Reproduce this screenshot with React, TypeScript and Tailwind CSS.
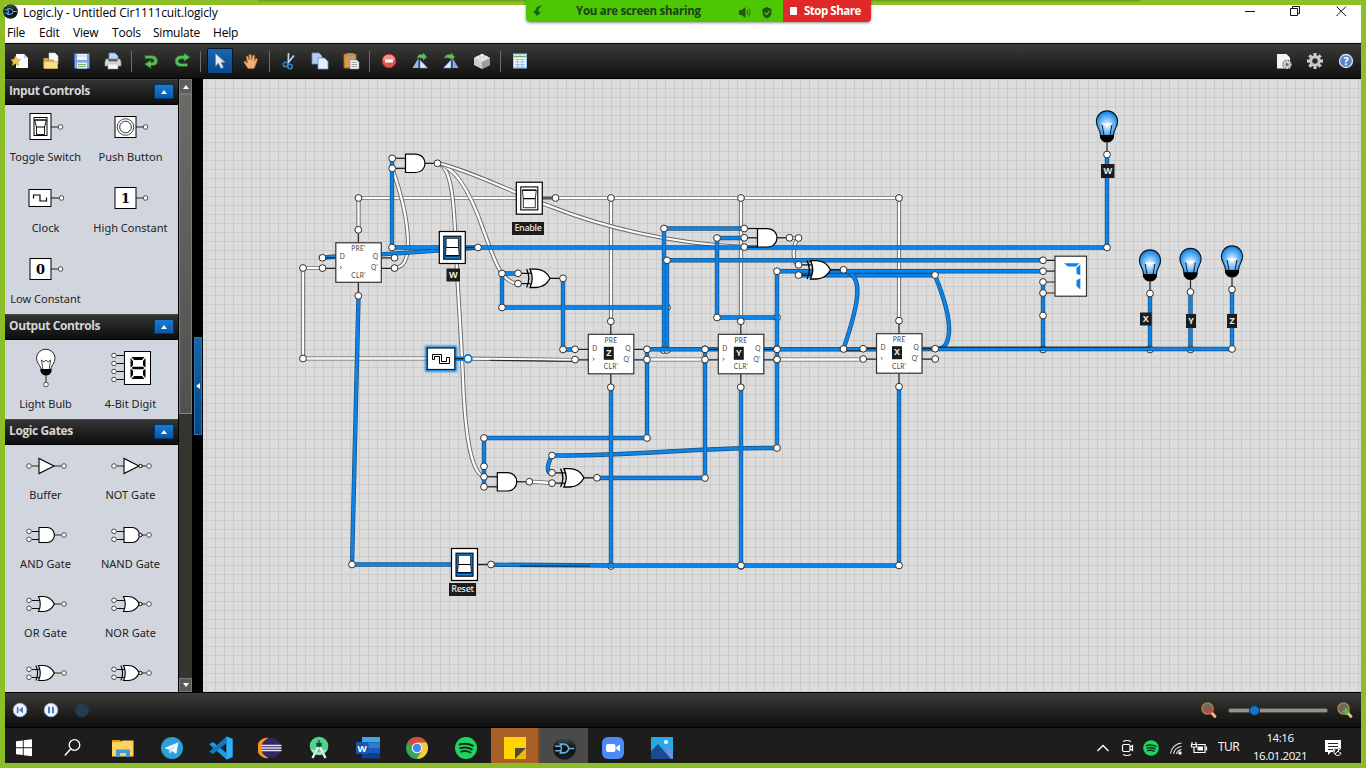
import React from "react";

type Kids = { children?: React.ReactNode };

/* ---------- shared schematic shapes ---------- */

const AND = "M0,-9.2 H10.3 A9.2,9.2 0 0 1 10.3,9.2 H0 Z";
const OR = "M0,-9.2 H6 C13,-9 17.5,-5 20,0 C17.5,5 13,9 6,9.2 H0 Q4.5,0 0,-9.2 Z";
const XOR_BACK = "M-3.4,-9.2 Q1.1,0 -3.4,9.2";

function Dot({ x, y, r = 3.4 }: { x: number; y: number; r?: number }) {
  return <circle cx={x} cy={y} r={r} fill="#fff" stroke={r > 3 ? "#2e2e2e" : "#4a4a4a"} strokeWidth={1} />;
}

function Tool({ children, active = false }: Kids & { active?: boolean }) {
  return (
    <div className="flex h-full w-[31px] items-center justify-center">
      <div
        className={
          active
            ? "flex h-[26px] w-[26px] items-center justify-center rounded-[2px] border border-[#02172f] bg-linear-to-b from-[#1a65ad] to-[#064a8b]"
            : "flex h-[26px] w-[26px] items-center justify-center"
        }
      >
        <svg width="18" height="18" viewBox="0 0 18 18">
          {children}
        </svg>
      </div>
    </div>
  );
}

function Sep() {
  return (
    <div className="flex h-full w-[7px] items-center justify-center">
      <div className="h-[21px] w-px bg-[#6c6c6c]" />
    </div>
  );
}

function Gear({ x, y, r, fill, hole }: { x: number; y: number; r: number; fill: string; hole: string }) {
  return (
    <g transform={`translate(${x} ${y})`}>
      {[0, 45, 90, 135].map((a) => (
        <rect key={a} x={-r * 0.2} y={-r} width={r * 0.4} height={r * 2} fill={fill} transform={`rotate(${a})`} />
      ))}
      <circle r={r * 0.72} fill={fill} />
      <circle r={r * 0.34} fill={hole} />
    </g>
  );
}

function LogiclyLogo({ size }: { size: number }) {
  return (
    <svg width={size} height={size} viewBox="0 0 22 22" className="shrink-0">
      <defs>
        <linearGradient id="lgo" x1="0" y1="0" x2="0" y2="1">
          <stop offset="0" stopColor="#4b5054" />
          <stop offset="0.5" stopColor="#0b0d0f" />
          <stop offset="1" stopColor="#1d2124" />
        </linearGradient>
      </defs>
      <circle cx="11" cy="11" r="10.8" fill="url(#lgo)" />
      <path
        d="M7,6.8 H10.5 C13,7 14.6,9 15.2,11 C14.6,13 13,15 10.5,15.2 H7 Q9,11 7,6.8 Z M2,8.9 H8 M2,13.1 H8 M15.2,11 H20.5"
        fill="none"
        stroke="#63aee6"
        strokeWidth="1.5"
      />
    </svg>
  );
}

/* ---------- title, menu, toolbar ---------- */

function ShareBar() {
  return (
    <div className="absolute left-[526px] top-0 z-20 flex h-[22px] w-[345px] overflow-hidden rounded-b-[4px] font-['Open_Sans',sans-serif] text-[11.5px] font-bold shadow-[0_1px_3px_rgba(0,0,0,0.45)]">
      <div className="flex w-[257px] items-center bg-[#4dc701] text-[#20401a]">
        <svg width="16" height="16" viewBox="0 0 16 16" className="ml-[4px]">
          <path d="M12.5 2.8 C9 2.2 5.5 4 5.5 8 H3 L6.8 13 L11 9.5 L8.5 8.7 C8.2 6 9.5 4 12.5 2.8Z" fill="#12661a" />
        </svg>
        <span className="ml-[30px] w-[130px] whitespace-nowrap tracking-[-0.28px]">You are screen sharing</span>
        <svg width="40" height="16" viewBox="0 0 40 16" className="ml-[31px] mt-[2px]">
          <path d="M2 6 H4.500 L8.500 3 V14 L4.500 11 H2Z" fill="#285719" />
          <path d="M10 6 Q11.500 8.500 10 11 M12 4.500 Q14 8.500 12 12.500" fill="none" stroke="#2c7a16" strokeWidth="1.1" />
          <path d="M30 3 L34.500 5 V9 Q34 13 30 14.500 Q26 13 25.500 9 V5Z" fill="#24531a" />
          <path d="M27.500 8.500 L29.500 10.500 L33 7" fill="none" stroke="#50bd17" strokeWidth="1.3" />
        </svg>
      </div>
      <div className="flex flex-1 items-center bg-[#e12828] pb-[1px] text-white">
        <div className="ml-[7px] h-[8px] w-[7px] rounded-[1px] bg-white" />
        <span className="ml-[7px] whitespace-nowrap tracking-[-0.48px]">Stop Share</span>
      </div>
    </div>
  );
}

function TitleBar() {
  return (
    <div className="relative flex h-[17px] shrink-0 items-center bg-white font-['Open_Sans',sans-serif] text-[12px] text-black">
      <div className="-ml-[2px] -mt-[4px] flex">
        <LogiclyLogo size={15} />
      </div>
      <span className="-mt-[2px] ml-[5px] whitespace-nowrap tracking-[-0.14px]">Logic.ly - Untitled Cir1111cuit.logicly</span>
      <svg width="110" height="14" viewBox="1242 4 110 14" className="-mt-[4px] ml-auto mr-[9px]" fill="none" stroke="#111" strokeWidth="1">
        <path d="M1245 10.500 H1255" />
        <path d="M1290.500 7.500 H1297.500 V14.500 H1290.500Z M1292.500 7 V5.500 H1299.500 V12.500 H1298" />
        <path d="M1336.500 5.500 L1346 15 M1346 5.500 L1336.500 15" />
      </svg>
    </div>
  );
}

const MENUS: [string, string][] = [
  ["File", "w-[32px]"],
  ["Edit", "w-[34px]"],
  ["View", "w-[39px]"],
  ["Tools", "w-[41px]"],
  ["Simulate", "w-[60px]"],
  ["Help", "w-[30px]"],
];

function MenuBar() {
  return (
    <div className="flex h-[21px] shrink-0 items-center border-b-2 border-[#eef2f1] bg-white pl-[2px] pt-[2px] font-['Open_Sans',sans-serif] text-[12px] tracking-[-0.22px] text-black">
      {MENUS.map(([m, w]) => (
        <span key={m} className={w}>
          {m}
        </span>
      ))}
    </div>
  );
}

function Toolbar() {
  return (
    <div className="flex h-[36px] shrink-0 items-center border-b border-t border-black bg-linear-to-b from-[#3b3b3a] to-[#11110f]">
      <div className="-ml-px flex h-full">
        <Tool>
          <path d="M5 2 H13 L17 6 V16 H5Z" fill="#fafafa" />
          <path d="M13 2 V6 H17Z" fill="#c9ccd0" />
          <path d="M4.500 4 L6 7.200 L9.500 7.600 L7 10 L7.600 13.500 L4.500 11.700 L1.300 13.500 L2 10 L-0.500 7.600 L3 7.200Z" fill="#f3c540" stroke="#c08b20" strokeWidth=".5" />
        </Tool>
        <Tool>
          <path d="M7 1 H13 L16 4 V12 H7Z" fill="#f8fafc" stroke="#c9cdd2" strokeWidth=".6" />
          <path d="M1.500 6 H6 L7 7.500 H12 V16 H1.500Z" fill="#d9a13c" />
          <path d="M2 9.500 H15.500 V16.500 H2Z" fill="#fadf8e" stroke="#e2b04b" strokeWidth=".8" />
        </Tool>
        <Tool>
          <rect x="1.500" y="1.500" width="15" height="15" rx="1" fill="#7fa6e2" stroke="#3a67b4" />
          <rect x="4" y="2" width="10" height="6" fill="#eef4fd" />
          <path d="M4 4 H14" stroke="#b5cdf1" />
          <rect x="4" y="10.500" width="10" height="6" fill="#e6f0e2" />
          <path d="M5 12.500 H13 M5 14.500 H13" stroke="#80b565" />
        </Tool>
        <Tool>
          <path d="M5 1 H11 L14 4 V9 H5Z" fill="#b9d8f5" stroke="#5d91c9" strokeWidth=".7" />
          <path d="M2 7 H16 L17 10 V14 H1 V10Z" fill="#d8dade" stroke="#85898f" strokeWidth=".7" />
          <rect x="4.500" y="7" width="9" height="2.500" fill="#5b6168" />
          <rect x="4" y="12" width="10" height="5" fill="#f6f7f8" stroke="#999" strokeWidth=".5" />
        </Tool>
        <Sep />
        <Tool>
          <path d="M3 3.500 H10 Q15.500 4 15.500 9 Q15.500 13.500 10.500 13.500 H9 V16.500 L2.500 12 L9 8 V10.500 H10 Q12 10.500 12 8.600 Q12 6.700 9.500 6.700 H3Z" fill="#5dbb5b" stroke="#216a2a" strokeWidth=".8" />
        </Tool>
        <Tool>
          <path d="M11 1 V3.500 H8 Q2 4 2 9 Q2 14.500 8 14.500 H14.500 V11.500 H8 Q5.500 11.500 5.500 9 Q5.500 7 8 7 H11 V9.500 L17 5Z" fill="#5dbb5b" stroke="#216a2a" strokeWidth=".8" />
        </Tool>
        <Sep />
        <Tool active>
          <path d="M4.500 1.500 V14 L7.500 11.200 L10 16.500 L12.500 15.300 L10 10.300 H14Z" fill="#e9e9ed" stroke="#7c8794" strokeWidth=".7" />
        </Tool>
        <Tool>
          <path d="M6 16.500 L1.800 10 Q2 8.500 3.500 9.500 L5.500 11 L4.300 5 Q4.500 3.500 6 4.500 L7.200 8 L7 3 Q8 1.500 9.200 3 L9.600 8 L10.800 3.500 Q12 2.500 12.800 4 L12.300 9 L13.800 6.500 Q15 6 15.500 7.500 L13.500 13 L12 16.500Z" fill="#edb27c" stroke="#ad6b35" strokeWidth=".8" />
        </Tool>
        <Sep />
        <Tool>
          <path d="M8.500 1 L8.300 11 M14 3.500 L7.500 11.500" stroke="#bed6ef" strokeWidth="1.700" />
          <circle cx="5.500" cy="12.500" r="2.200" fill="none" stroke="#3d82c5" strokeWidth="1.500" />
          <circle cx="10" cy="14.500" r="2.200" fill="none" stroke="#3d82c5" strokeWidth="1.500" />
        </Tool>
        <Tool>
          <path d="M1 1 H8 L11 4 V12 H1Z" fill="#b7cbef" stroke="#6b8fd2" strokeWidth=".8" />
          <path d="M7 6 H13.500 L17 9.500 V17 H7Z" fill="#e6eefc" stroke="#6b8fd2" strokeWidth=".8" />
        </Tool>
        <Tool>
          <rect x="2" y="2" width="12" height="14" rx="1" fill="#d89a48" stroke="#a4692c" />
          <rect x="5" y="1" width="6" height="3.500" fill="#9c958a" />
          <path d="M8 8 H15 L17 10 V17 H8Z" fill="#f2f2f4" stroke="#888" strokeWidth=".6" />
          <path d="M9.500 10.500 H15 M9.500 12.500 H15 M9.500 14.500 H15" stroke="#858b95" strokeWidth=".8" />
        </Tool>
        <Sep />
        <Tool>
          <circle cx="9" cy="9" r="6.800" fill="#e2574c" stroke="#b8322d" />
          <path d="M2.800 8 A6.300 6.300 0 0 1 15.200 8Z" fill="#f19188" />
          <rect x="5" y="7.500" width="8" height="3" rx=".5" fill="#fff" />
        </Tool>
        <Tool>
          <path d="M7.500 6 V16 H1.500Z" fill="#9abcf0" />
          <path d="M9 8 L16.500 16 H9Z" fill="#e0ebfc" stroke="#6693dc" strokeWidth=".7" />
          <path d="M6 6 Q7 1.500 12 2.500 V.5 L16 5 L12 8.500 V6.500 Q8 5.500 6 6Z" fill="#65b95d" stroke="#2a7130" strokeWidth=".6" />
        </Tool>
        <Tool>
          <path d="M10.500 6 V16 H16.500Z" fill="#84aaf0" />
          <path d="M9 8 L1.500 16 H9Z" fill="#e0ebfc" stroke="#6693dc" strokeWidth=".7" />
          <path d="M2 6 Q4 1.500 9 2.500 V.5 L13 5 L9 8.500 V6.500 Q5 5.500 2 6Z" fill="#65b95d" stroke="#2a7130" strokeWidth=".6" />
        </Tool>
        <Tool>
          <path d="M1 6 L9 2 L17 6 V13 L9 17 L1 13Z" fill="#cdcdcd" />
          <path d="M1 6 L9 10 L17 6 L9 2Z" fill="#eee" />
          <path d="M9 10 V17 L17 13 V6Z" fill="#9d9d9d" />
          <g fill="#f7f7f7" stroke="#aaa" strokeWidth=".5">
            <ellipse cx="9" cy="3.500" rx="2" ry="1.500" />
            <ellipse cx="5" cy="5.500" rx="2" ry="1.500" />
            <ellipse cx="13" cy="5.500" rx="2" ry="1.500" />
            <ellipse cx="9" cy="7.500" rx="2" ry="1.500" />
          </g>
        </Tool>
        <Sep />
        <Tool>
          <rect x="2.500" y="2" width="13" height="14" fill="#f7faff" stroke="#9dbbe6" />
          <path d="M3 4.500 H15" stroke="#68ad5c" strokeWidth="1.500" />
          <path d="M4 7.500 H14 M4 10 H14 M4 12.500 H14 M4 14.700 H14 M6.500 6.500 V16 M11 6.500 V16" stroke="#8fb1e4" strokeWidth=".8" />
        </Tool>
      </div>
      <div className="ml-auto flex h-full">
        <Tool>
          <path d="M2 2 H11.500 L15 5.500 V16.500 H2Z" fill="#f4f4f4" />
          <circle cx="12" cy="12.500" r="4.700" fill="#6d6d6d" />
          <Gear x={12} y={12.500} r={4.500} fill="#cfcfcf" hole="#6d6d6d" />
        </Tool>
        <Tool>
          <Gear x={9} y={9} r={8} fill="#cacaca" hole="#2a2a29" />
        </Tool>
        <Tool>
          <circle cx="9" cy="9" r="6.500" fill="#5687ce" stroke="#dce7f7" strokeWidth="1.300" />
          <text x="9" y="13" fontSize="11" fontWeight="bold" fontFamily="Open Sans, sans-serif" fill="#fff" textAnchor="middle">?</text>
        </Tool>
      </div>
    </div>
  );
}

/* ---------- component palette ---------- */

function PaletteHeader({ label }: { label: string }) {
  return (
    <div className="flex h-[26px] shrink-0 items-center justify-between border-b border-t border-b-black border-t-[#4a4a4a] bg-linear-to-b from-[#353535] to-[#0e0e0e] pl-[4px] pr-[4px]">
      <span className="pb-[2px] font-['Open_Sans',sans-serif] text-[12px] font-bold tracking-[-0.4px] text-[#d6d6d6]">{label}</span>
      <div className="mb-[1px] flex h-[15px] w-[20px] items-center justify-center border border-[#02376d] bg-linear-to-b from-[#1b7cd0] to-[#0a59a8]">
        <svg width="6" height="4" viewBox="0 0 6 4">
          <path d="M0 4 L3 0 L6 4Z" fill="#fff" />
        </svg>
      </div>
    </div>
  );
}

function Item({ label, rowH, artH, cy, children }: Kids & { label?: string; rowH: string; artH: number; cy: number }) {
  return (
    <div className={"flex flex-col items-center " + rowH}>
      <svg width="60" height={artH} viewBox={`-30 ${-cy} 60 ${artH}`} className="shrink-0">
        {children}
      </svg>
      {label && (
        <span className="whitespace-nowrap font-['Noto_Sans',sans-serif] text-[11px] leading-[16px] tracking-[0.02px] text-[#222]">{label}</span>
      )}
    </div>
  );
}

const thin = { fill: "none", stroke: "#606060", strokeWidth: 1.5 };

function PaletteGate({ label, kind, inv }: { label?: string; kind: "buf" | "and" | "or" | "xor"; inv: boolean }) {
  return (
    <Item label={label} rowH="h-[69px]" artH={42} cy={21}>
      <path d="M8 0 H15" {...thin} />
      {kind === "buf" ? (
        <path d="M-14 0 H-7" {...thin} />
      ) : (
        <path d="M-14 -3.500 H-6 M-14 4.500 H-6" fill="none" stroke="#111" strokeWidth="1" />
      )}
      {kind === "buf" && <path d="M-7 -7.500 V7.500 L8 0Z" fill="#fff" stroke="#000" strokeWidth="1.100" />}
      {kind === "and" && <path d={AND} transform="translate(-7 0) scale(.79 .82)" fill="#fff" stroke="#000" strokeWidth="1.400" />}
      {(kind === "or" || kind === "xor") && <path d={OR} transform="translate(-7.500 0) scale(.79 .82)" fill="#fff" stroke="#000" strokeWidth="1.400" />}
      {kind === "xor" && <path d={XOR_BACK} transform="translate(-7.500 0) scale(.79 .82)" fill="none" stroke="#000" strokeWidth="1.400" />}
      {inv && <circle cx="9.500" cy="0" r="1.700" fill="#fff" stroke="#000" />}
      {kind === "buf" ? (
        <Dot x={-17} y={0} r={2.3} />
      ) : (
        <>
          <Dot x={-17} y={-3.7} r={2.3} />
          <Dot x={-17} y={4.3} r={2.3} />
        </>
      )}
      <Dot x={18} y={0} r={2.3} />
    </Item>
  );
}

function SegEight() {
  return (
    <g fill="#000">
      <path d="M-6 -11 H7 L4.500 -8 H-3.500Z" />
      <path d="M-7 -10 L-4.500 -7 V-2.500 L-7 -.5Z M8 -10 L5.500 -7 V-2.500 L8 -.5Z" />
      <path d="M-4.500 -1.300 H5.500 L7 0 L5.500 1.300 H-4.500 L-6 0Z" />
      <path d="M-7 .8 L-4.500 2.500 V7 L-7 10Z M8 .8 L5.500 2.500 V7 L8 10Z" />
      <path d="M-6 11 H7 L4.500 8 H-3.500Z" />
    </g>
  );
}

function Palette() {
  return (
    <div className="flex h-full w-[173px] shrink-0 flex-col overflow-hidden bg-[#d1d6de]">
      <PaletteHeader label="Input Controls" />
      <div className="grid h-[209px] shrink-0 grid-cols-[81px_89px] content-start overflow-hidden">
        <Item label="Toggle Switch" rowH="h-[71px]" artH={44} cy={22}>
          <path d="M5 0 H13" {...thin} />
          <rect x="-16" y="-13.500" width="21" height="26" fill="#fff" stroke="#000" />
          <rect x="-12" y="-9.500" width="13" height="18" fill="none" stroke="#000" />
          <path d="M-11.500 -7 H.5 L-1.500 0 V7.500 H-9.500 V0Z" fill="#fff" stroke="#000" strokeWidth=".9" />
          <path d="M-9.500 0 H-1.500 M-11.500 -7 H.5" stroke="#000" />
          <Dot x={14.500} y={0} r={2.300} />
        </Item>
        <Item label="Push Button" rowH="h-[71px]" artH={44} cy={22}>
          <path d="M5 0 H13" {...thin} />
          <rect x="-16" y="-10.500" width="21" height="21" fill="#fff" stroke="#000" />
          <circle cx="-5.500" cy="0" r="8.300" fill="#fff" stroke="#444" />
          <circle cx="-5.500" cy="0" r="5.800" fill="#fff" stroke="#333" />
          <Dot x={14.500} y={0} r={2.300} />
        </Item>
        <Item label="Clock" rowH="h-[71px]" artH={44} cy={22}>
          <path d="M5 0 H13" fill="none" stroke="#111" />
          <rect x="-17" y="-8.500" width="22" height="17" fill="#fff" stroke="#000" />
          <path d="M-12.500 .5 V-3 H-6 V3 H.5 V-.5" fill="none" stroke="#000" strokeWidth="1.200" />
          <Dot x={15.500} y={0} r={2.300} />
        </Item>
        <Item label="High Constant" rowH="h-[71px]" artH={44} cy={22}>
          <path d="M5 0 H13" {...thin} />
          <rect x="-16" y="-10.500" width="21" height="21" fill="#fff" stroke="#000" />
          <text x="-5.500" y="5" fontFamily="DejaVu Serif, serif" fontWeight="bold" fontSize="13" textAnchor="middle">1</text>
          <Dot x={14.500} y={0} r={2.300} />
        </Item>
        <Item label="Low Constant" rowH="h-[71px]" artH={44} cy={22}>
          <path d="M5 0 H13" {...thin} />
          <rect x="-16" y="-10.500" width="21" height="21" fill="#fff" stroke="#000" />
          <text x="-5.500" y="5" fontFamily="DejaVu Serif, serif" fontWeight="bold" fontSize="13" textAnchor="middle">0</text>
          <Dot x={14.500} y={0} r={2.300} />
        </Item>
      </div>
      <PaletteHeader label="Output Controls" />
      <div className="grid h-[79px] shrink-0 grid-cols-[81px_89px] content-start overflow-hidden">
        <Item label="Light Bulb" rowH="h-[79px]" artH={56} cy={28}>
          <path d="M-4.500 3 C-5 -3 -9.500 -4 -9.500 -10.500 A9.300 9.300 0 0 1 9 -10.500 C9 -4 5 -3 4.500 3Z" fill="#fff" stroke="#222" />
          <path d="M-3 3 L-4.500 -8 L-2 -6 L0 -8 L2 -6 L4.500 -8 L3 3" fill="none" stroke="#333" strokeWidth=".9" />
          <path d="M-5.500 1 H5.500 V3.500 Q4 7.500 0 7.500 Q-4 7.500 -5.500 3.500Z" fill="#000" />
          <path d="M0 7 V15" stroke="#222" />
          <Dot x={0} y={16.500} r={2.300} />
        </Item>
        <Item label="4-Bit Digit" rowH="h-[79px]" artH={56} cy={28}>
          <path d="M-14 -12.500 H-6 M-14 -4.500 H-6 M-14 3.500 H-6 M-14 11.500 H-6" stroke="#111" />
          <rect x="-6.500" y="-16.500" width="26" height="33" fill="#fff" stroke="#000" />
          <g transform="translate(6.500 0)">
            <SegEight />
          </g>
          <Dot x={-17} y={-12.500} r={2.300} />
          <Dot x={-17} y={-4.500} r={2.300} />
          <Dot x={-17} y={3.500} r={2.300} />
          <Dot x={-17} y={11.500} r={2.300} />
        </Item>
      </div>
      <PaletteHeader label="Logic Gates" />
      <div className="grid shrink-0 grid-cols-[81px_89px]">
        <PaletteGate label="Buffer" kind="buf" inv={false} />
        <PaletteGate label="NOT Gate" kind="buf" inv />
        <PaletteGate label="AND Gate" kind="and" inv={false} />
        <PaletteGate label="NAND Gate" kind="and" inv />
        <PaletteGate label="OR Gate" kind="or" inv={false} />
        <PaletteGate label="NOR Gate" kind="or" inv />
        <PaletteGate kind="xor" inv={false} />
        <PaletteGate kind="xor" inv />
      </div>
    </div>
  );
}

function ScrollColumn() {
  return (
    <>
      <div className="flex w-[15px] shrink-0 flex-col border-x border-black bg-[#34352f]">
        <div className="flex h-[15px] items-center justify-center border border-[#777] bg-[#5d5d5b]">
          <svg width="6" height="4" viewBox="0 0 6 4">
            <path d="M0 4 L3 0 L6 4Z" fill="#fff" />
          </svg>
        </div>
        <div className="h-[320px] border border-[#7b7b78] border-b-[#8a8a86] bg-linear-to-b from-[#6a6a66] to-[#51514d]" />
        <div className="mt-auto flex h-[14px] items-center justify-center border border-[#777] bg-[#5a5a58]">
          <svg width="6" height="4" viewBox="0 0 6 4">
            <path d="M0 0 L3 4 L6 0Z" fill="#fff" />
          </svg>
        </div>
      </div>
      <div className="flex w-[10px] shrink-0 flex-col bg-black pt-[258px]">
        <div className="ml-[1px] flex h-[98px] w-[8px] items-center justify-center border border-[#2a72b5] bg-linear-to-b from-[#1765ab] to-[#054686]">
          <svg width="4" height="6" viewBox="0 0 4 6">
            <path d="M4 0 L0 3 L4 6Z" fill="#fff" />
          </svg>
        </div>
      </div>
    </>
  );
}

/* ---------- circuit canvas ---------- */

function Wire({ d, on = false }: { d: string; on?: boolean }) {
  return (
    <g fill="none" strokeLinejoin="round">
      <path d={d} stroke={on ? "#1d4e7a" : "#686868"} strokeWidth={on ? 4.4 : 4.2} />
      <path d={d} stroke={on ? "#0b84ea" : "#fcfcfc"} strokeWidth={on ? 3 : 2.3} />
    </g>
  );
}

function Tag({ x, y, w, h = 13, t }: { x: number; y: number; w: number; h?: number; t: string }) {
  return (
    <g>
      <rect x={x} y={y} width={w} height={h} fill="#1b1c1b" />
      <text x={x + w / 2} y={y + h / 2 + 2.6} fill="#eaeaea" fontFamily="Noto Sans, sans-serif" fontSize="9" fontWeight={t.length > 1 ? 500 : 700} textAnchor="middle" letterSpacing={t.length > 1 ? -0.3 : 0}>
        {t}
      </text>
    </g>
  );
}

function FlipFlop({ x, y, pre = "PRE", tag }: { x: number; y: number; pre?: string; tag?: string }) {
  return (
    <g transform={`translate(${x} ${y})`}>
      <path d="M-11 15 H0 M-11 25.500 H0 M45.500 15 H56 M45.500 25.500 H56 M22.500 0 V-10 M22.500 39.500 V50" stroke="#222" strokeWidth="1.200" />
      <rect width="45.500" height="39.500" fill="#fff" stroke="#333" strokeWidth="1.200" />
      <g fontFamily="Lato, sans-serif" fontSize="6.600" fill="#444">
        <text x="22.700" y="8.700" textAnchor="middle" letterSpacing=".3">{pre}</text>
        <text x="22.700" y="35" textAnchor="middle" letterSpacing=".3">CLR'</text>
        <text x="4" y="16.700">D</text>
        <path d="M4.300 23.500 L6 24.800 L4.300 26.100" fill="none" stroke="#555" strokeWidth=".8" />
        <text x="37" y="16.700">Q</text>
        <text x="35.300" y="27.700">Q'</text>
      </g>
      {tag && <Tag x={15.500} y={12.500} w={10} t={tag} />}
      <Dot x={-13.300} y={15} />
      <Dot x={-13.300} y={25.300} />
      <Dot x={58.700} y={15} />
      <Dot x={58.700} y={25.300} />
      <Dot x={22.500} y={-13} />
      <Dot x={22.500} y={53} />
    </g>
  );
}

function AndGate({ x, y, ins }: { x: number; y: number; ins: number[] }) {
  return (
    <g transform={`translate(${x} ${y})`}>
      {ins.map((i) => (
        <path key={i} d={`M-11 ${i} H0`} stroke="#111" strokeWidth="1.200" />
      ))}
      <path d="M19 0 H30" stroke="#111" strokeWidth="1.200" />
      <path d={AND} fill="#fff" stroke="#000" strokeWidth="1.200" />
      {ins.map((i) => (
        <Dot key={i} x={-13.300} y={i} />
      ))}
      <Dot x={32} y={0} />
    </g>
  );
}

function XorGate({ x, y }: { x: number; y: number }) {
  return (
    <g transform={`translate(${x} ${y})`}>
      <path d="M-11 -5 H1 M-11 5.300 H1 M20 0 H31" stroke="#111" strokeWidth="1.200" />
      <path d={OR} fill="#fff" stroke="#000" strokeWidth="1.300" />
      <path d={XOR_BACK} fill="none" stroke="#000" strokeWidth="1.300" />
      <Dot x={-12} y={-5} />
      <Dot x={-12} y={5.300} />
      <Dot x={33} y={0} />
    </g>
  );
}

function Toggle({ x, y, on = false }: { x: number; y: number; on?: boolean }) {
  return (
    <g transform={`translate(${x} ${y})`} stroke="#000">
      <rect width="26" height="32" fill="#fff" strokeWidth="1.200" />
      <rect x="4.500" y="4.700" width="17" height="23" fill={on ? "#0b84ea" : "#fff"} strokeWidth="1.100" />
      {on ? (
        <>
          <path d="M6.800 6.800 H19.200 V16 L20 24 H6 L6.800 16Z" fill="#fff" strokeWidth=".8" />
          <path d="M6.800 16 H19.200 M5.800 24.300 H20.200" strokeWidth="1.200" />
        </>
      ) : (
        <>
          <path d="M6 8 H20 L19 16.500 V25.500 H7 V16.500Z" fill="#fff" strokeWidth=".8" />
          <path d="M6 8 H20 M7 16.500 H19" strokeWidth="1.200" />
        </>
      )}
    </g>
  );
}

function Bulb({ x, y }: { x: number; y: number }) {
  return (
    <g transform={`translate(${x} ${y})`}>
      <path d="M0 21 V30" stroke="#222" strokeWidth="1.200" />
      <path d="M-6.500 14 C-6.500 7 -10.600 6 -10.600 0 A10.600 10.600 0 0 1 10.600 0 C10.600 6 6.500 7 6.500 14Z" fill="url(#glow)" stroke="#0a1520" strokeWidth="1.100" />
      <path d="M-3 14 L-5 3 M3 14 L5 3" stroke="#123" strokeWidth="1" />
      <path d="M-5 3 L-3 2 L-1.500 4 L0 2 L1.500 4 L3 2 L5 3" fill="none" stroke="#fff" strokeWidth="1.200" />
      <path d="M-7 13.500 H7 V16 Q5 21 0 21 Q-5 21 -7 16Z" fill="#000" />
      <Dot x={0} y={33} />
    </g>
  );
}

const OFF_WIRES = [
  "M358.500 230 V198 H899 V321",
  "M611 198 V321",
  "M741 198 V321",
  "M322 268 H303 V358.500 H427",
  "M468 358.700 L575 360",
  "M647 359.500 H705",
  "M777 359.500 H863",
  "M437 163 C452 165 454 205 455.500 240 C457 280 461 330 463 380 C465 430 470 472 484 477",
  "M437 163 C457 167 472 197 483 229 C493 255 500 283 518 283.500",
  "M437 163 C470 170 520 196 552 207 C600 226 670 244 744 247",
  "M394 268 C408 268 408 250 408 240 C407 215 400 190 392 168",
  "M789 238 H798.500 C792 246 792 263 799 265",
  "M529 481.500 L552 483",
];

const ON_WIRES = [
  "M319 258 L336 256.500 C360 256 420 252 478 247.500",
  "M392 158 V247.500 H1107 V155",
  "M358.500 296 L352 564.500 H452",
  "M502 273.500 H518 M502 273.500 V307.500 H664",
  "M563 278 V349.500 H575",
  "M744 228.500 H664 V349",
  "M667 349 V260.300 H1043",
  "M744 238 H717 V317.500 H777",
  "M799 275.300 H935 C941 290 950 315 949 332 C948 345 944 349 935 349",
  "M843.500 270 C864 275 860 300 843.500 349",
  "M777 448 C700 447 640 456 552 455.500 C546 467 547 473 552 473",
  "M1043 271.200 H777 V448",
  "M647 349 V438 H484 V487",
  "M705 349 V478 H597",
  "M611 387 V565",
  "M741 387 V565",
  "M899 387 V565",
  "M1043 282 V349",
  "M1150 294 V349",
  "M1190.500 292 V349",
  "M1232 290 V349",
];

const TOP_WIRES = ["M647 349.300 H718", "M764 349.300 H876", "M922 349 H1232", "M491 564.700 L611 565.500 H899"];

const BACK_DOTS = [[667, 307.5], [777, 317.5]];
const UNDER_DOTS = [[611, 566], [741, 566], [1043, 349.5], [1150, 349.5], [1190.5, 349.5], [663.5, 350], [667, 350]];

const OVER_DOTS = [
  [358.5, 198], [555.5, 198], [611, 198], [741, 198], [899, 198], [303, 268], [303, 358.5],
  [392, 247.5], [478, 247.5], [502, 273.5], [502, 307.5], [563, 349.5], [664, 228.5], [667, 260.3],
  [717, 238], [717, 317.5], [777, 271.2], [798.5, 238], [935, 275], [843.5, 349], [1107, 247.5],
  [647, 438], [484, 438], [484, 466.3], [705, 478], [552, 455.5], [777, 448], [352, 564.5], [491, 564.5],
  [899, 565.5], [1232, 349], [1043, 260.3], [1043, 271.2], [1043, 282], [1043, 293], [1043, 315.5], [741, 565.5],
];

function Circuit() {
  return (
    <svg width="1158" height="613" viewBox="203 79 1158 613" className="block">
      <defs>
        <pattern id="grid" x="206" y="88" width="9" height="9" patternUnits="userSpaceOnUse">
          <rect width="9" height="9" fill="#dcdcdc" />
          <path d="M0 .5 H9 M.5 0 V9" stroke="#cbcbcb" strokeWidth="1" />
        </pattern>
        <radialGradient id="glow" cx="50%" cy="58%" r="52%">
          <stop offset="0" stopColor="#fff" />
          <stop offset="0.35" stopColor="#a6d3fb" />
          <stop offset="1" stopColor="#1b8bea" />
        </radialGradient>
        <filter id="halo" x="-30%" y="-40%" width="160%" height="180%">
          <feGaussianBlur stdDeviation="1" />
        </filter>
      </defs>
      <rect x="203" y="79" width="1158" height="613" fill="url(#grid)" />
      {OFF_WIRES.map((d) => <Wire key={d} d={d} />)}
      {BACK_DOTS.map(([x, y]) => <Dot key={`${x}-${y}`} x={x} y={y} />)}
      {ON_WIRES.map((d) => <Wire key={d} d={d} on />)}
      {UNDER_DOTS.map(([x, y]) => <Dot key={`${x}-${y}`} x={x} y={y} />)}
      {TOP_WIRES.map((d) => <Wire key={d} d={d} on />)}
      <path d="M777 300 V448" stroke="#0b84ea" strokeWidth="3" />
      <path d="M490 360.300 L575 361.300 M844 350.800 H863 M935 347.200 H1150 M520 566 H590" stroke="#222" strokeWidth="1" />
      <path d="M543 198 H553 M465 247.500 H476 M478 564.500 H489" stroke="#222" strokeWidth="1.500" />
      <path d="M1045 260.300 H1055 M1045 271.200 H1055 M1045 282 H1055 M1045 293 H1055" stroke="#222" strokeWidth="1.200" />

      <FlipFlop x={335.800} y={242.800} pre="PRE'" />
      <FlipFlop x={588.300} y={334.300} tag="Z" />
      <FlipFlop x={718.300} y={334.300} tag="Y" />
      <FlipFlop x={876.500} y={333.700} tag="X" />

      {OVER_DOTS.map(([x, y]) => <Dot key={`${x}-${y}`} x={x} y={y} />)}
      <Dot x={705} y={349.300} />
      <Dot x={777} y={349.300} />
      <Dot x={777} y={359.500} />

      <AndGate x={405.500} y={163.300} ins={[-5, 5]} />
      <AndGate x={757.500} y={237.800} ins={[-9.300, 0, 9.300]} />
      <AndGate x={497.300} y={481.800} ins={[-5, 5]} />
      <XorGate x={530} y={278.300} />
      <XorGate x={810.500} y={269.800} />
      <XorGate x={564} y={477.800} />

      <Toggle x={516.300} y={182.200} />
      <Toggle x={439.300} y={231.500} on />
      <Toggle x={451.500} y={548.500} on />

      <g>
        <rect x="426.500" y="347.300" width="29" height="23" fill="none" stroke="#0b84ea" strokeWidth="3" filter="url(#halo)" />
        <path d="M455 358.700 H466" stroke="#0b84ea" strokeWidth="4.500" />
        <path d="M455 358.700 H466" stroke="#111" strokeWidth="1.200" />
        <rect x="427.300" y="348" width="27.500" height="21.500" fill="#fff" stroke="#06182a" strokeWidth="1.200" />
        <path d="M432.500 359.500 V354.500 H441.500 V361.500 H446.500 V357.500 H449.500 V363.500 H439.500 V356.500 H434.500 V359.500 Z" fill="#fff" stroke="#000" strokeWidth="1" />
        <circle cx="468" cy="358.700" r="3.800" fill="#fff" stroke="#0b74d4" strokeWidth="1.800" />
      </g>

      <rect x="1055" y="256.200" width="31.500" height="40" fill="#fff" stroke="#333" strokeWidth="1.200" />
      <g fill="#0b84ea">
        <path d="M1064 263.200 H1079.500 L1076 266.500 H1068Z" />
        <path d="M1080.300 264.500 V275.500 L1076.500 273.500 V267.800Z" />
        <path d="M1080.300 278.300 V289.500 L1076.500 286 V280.300Z" />
      </g>

      <Bulb x={1107} y={121.500} />
      <Bulb x={1150} y={260.500} />
      <Bulb x={1190.500} y={259} />
      <Bulb x={1232} y={256.500} />

      <Tag x={512} y={222} w={32} t="Enable" />
      <Tag x={446.500} y={268.500} w={13.500} t="W" />
      <Tag x={449} y={583} w={27} t="Reset" />
      <Tag x={1101} y={164} w={13.500} h={14} t="W" />
      <Tag x={1140} y={312.500} w={11.500} t="X" />
      <Tag x={1186} y={314} w={10} h={14} t="Y" />
      <Tag x={1227} y={314} w={10} h={14} t="Z" />
    </svg>
  );
}

/* ---------- simulation bar ---------- */

function Round({ children }: Kids) {
  return (
    <div className="flex w-[31px] items-center justify-center">
      <svg width="16" height="16" viewBox="0 0 16 16">
        {children}
      </svg>
    </div>
  );
}

function Magnifier({ plus }: { plus: boolean }) {
  return (
    <svg width="18" height="18" viewBox="0 0 18 18" className="shrink-0">
      <path d="M11 11 L15 15.500" stroke="#eeb773" strokeWidth="3" strokeLinecap="round" />
      <circle cx="7.500" cy="7.500" r="5.500" fill="#666a69" stroke="#b77a3b" strokeWidth="1.600" />
      {plus ? (
        <path d="M10 7 V14 M6.500 10.500 H13.500" stroke="#58bd56" strokeWidth="2.100" />
      ) : (
        <path d="M6.500 10 H13.500" stroke="#ee3434" strokeWidth="2.600" />
      )}
    </svg>
  );
}

function PlayBar() {
  return (
    <div className="flex h-[36px] shrink-0 items-center border-b border-t border-black bg-linear-to-b from-[#3b3b3a] to-[#0e0e0d]">
      <div className="-ml-px flex">
        <Round>
          <circle cx="8" cy="8" r="6.800" fill="#f1f5fb" stroke="#8ba9d8" />
          <path d="M4.800 4.800 H6.500 V11.200 H4.800Z M11 4.800 V11.200 L6.800 8Z" fill="#4b7cc6" />
        </Round>
        <Round>
          <circle cx="8" cy="8" r="6.800" fill="#f1f5fb" stroke="#8ba9d8" />
          <path d="M5 4.800 H7 V11.200 H5Z M9 4.800 H11 V11.200 H9Z" fill="#4b7cc6" />
        </Round>
        <Round>
          <circle cx="8" cy="8" r="7" fill="#263c50" stroke="#22313e" />
        </Round>
      </div>
      <div className="ml-auto flex items-center pr-[7px]">
        <Magnifier plus={false} />
        <svg width="101" height="14" viewBox="0 0 101 14" className="ml-[10px] mr-[7px] mt-[2px]">
          <rect x=".5" y="4.500" width="99" height="4" rx="1.500" fill="#96918c" stroke="#4c4a48" strokeWidth=".6" />
          <circle cx="26.500" cy="6.500" r="5" fill="#1674c4" stroke="#062c50" />
        </svg>
        <Magnifier plus />
      </div>
    </div>
  );
}

/* ---------- taskbar ---------- */

function TaskIcon({ children, bg = "" }: Kids & { bg?: string }) {
  return (
    <div className={"flex h-full w-[49px] shrink-0 items-center justify-center pt-[5px] " + bg}>
      <svg width="24" height="24" viewBox="0 0 24 24">
        {children}
      </svg>
    </div>
  );
}

function Spotify() {
  return (
    <>
      <circle cx="12" cy="12" r="11" fill="#1ed760" />
      <path d="M5.500 8.500 Q13 6.500 19 9.800 M6.300 12.200 Q12.500 10.500 17.800 13.300 M7 15.600 Q12 14.200 16.500 16.500" fill="none" stroke="#112a1a" strokeWidth="1.900" strokeLinecap="round" />
    </>
  );
}

function Taskbar() {
  return (
    <div className="flex h-[35px] shrink-0 bg-[#1d1d1d] text-white">
      <div className="-ml-[5px] flex">
        <TaskIcon>
          <path d="M3 5.300 L9.800 4.400 V11.300 H3Z M10.700 4.300 L19 3.200 V11.300 H10.700Z M3 12.300 H9.800 V19 L3 18.200Z M10.700 12.300 H19 V20.300 L10.700 19.200Z" fill="#fff" />
        </TaskIcon>
        <TaskIcon>
          <circle cx="12.500" cy="9" r="5.300" fill="none" stroke="#fff" strokeWidth="1.300" />
          <path d="M8.700 13 L2.800 19.500" stroke="#fff" strokeWidth="1.400" />
        </TaskIcon>
        <TaskIcon>
          <path d="M1 4 H9 L11 6 H1Z" fill="#e29c12" />
          <path d="M1 6 H10 L11.500 4.500 H22.500 V20.500 H1Z" fill="#ffd25a" />
          <path d="M5 13.500 H19 V21 H15 V17 H9 V21 H5Z" fill="#3c9be0" />
        </TaskIcon>
        <TaskIcon>
          <circle cx="12" cy="12" r="11" fill="#2aa1da" />
          <path d="M4.500 12 L18.500 6.200 L16.200 18 L12 15 L9.500 17.500 L9 13.800Z" fill="#f4f9fc" />
          <path d="M9 13.800 L16 8.500 L11 14.500 L9.500 17.500Z" fill="#b8d7e8" />
        </TaskIcon>
        <TaskIcon>
          <path d="M17.500 7 V17 L4 6 L.5 8 V8.500 L17.500 23.500 L23.500 21 V3 L17.500 .5Z" fill="#199ce8" />
          <path d="M17.500 .5 V7 L4 18 L.5 16 V15.500Z" fill="#0d79c4" />
          <path d="M17.500 .5 L23.500 3 V21 L17.500 23.500Z" fill="#2db0f6" />
        </TaskIcon>
        <TaskIcon>
          <path d="M10 1.500 A11 10.500 0 0 0 10 22.500 Q3 12 10 1.500Z" fill="#f7941e" />
          <circle cx="13" cy="12" r="10" fill="#342860" />
          <path d="M3 9.500 H23.500 M3 12 H23.500 M3 14.500 H23.500" stroke="#e5e0f1" strokeWidth="1.400" />
        </TaskIcon>
        <TaskIcon>
          <circle cx="12" cy="10" r="9.300" fill="#4dd58a" />
          <path d="M12 4 V9 M10 7.500 H14 V10.500 H10Z" fill="#12493a" stroke="#12493a" strokeWidth="1.300" />
          <path d="M11 11 L5.500 22 M13 11 L18.500 22" stroke="#eaf2f0" strokeWidth="2.300" />
          <path d="M5 14 Q12 21 19 14" fill="none" stroke="#d0ded9" strokeWidth="1.700" />
        </TaskIcon>
        <TaskIcon>
          <path d="M6 1 H24 V6.500 H6Z" fill="#41a5ee" />
          <path d="M6 6.500 H24 V12 H6Z" fill="#2b7cd3" />
          <path d="M6 12 H24 V17.500 H6Z" fill="#185abd" />
          <path d="M6 17.500 H24 V22.500 H6Z" fill="#103f91" />
          <rect x="0" y="6" width="12.500" height="12" rx="1" fill="#1a56b0" />
          <text x="6.200" y="15.500" fontSize="9.500" fontFamily="Open Sans, sans-serif" fontWeight="bold" fill="#fff" textAnchor="middle">W</text>
        </TaskIcon>
        <TaskIcon>
          <circle cx="12" cy="12" r="11" fill="#34a853" />
          <path d="M12 12 L2.500 6.500 A11 11 0 0 1 21.500 6.500 H12Z" fill="#dc4a3e" />
          <path d="M12 6.500 H21.500 A11 11 0 0 1 12 23 L17 14Z" fill="#fcc934" />
          <circle cx="12" cy="12" r="5.300" fill="#f5f5f5" />
          <circle cx="12" cy="12" r="4.200" fill="#4285f4" />
        </TaskIcon>
        <TaskIcon>
          <Spotify />
        </TaskIcon>
        <TaskIcon bg="ml-px border-r-2 border-[#884716] bg-[#aa6026]">
          <path d="M1 1 H23 V12 H12 V23 H1Z" fill="#ffd400" />
          <path d="M12 12 H23 L12 23Z" fill="#4b4940" />
          <path d="M23 12 V23 H12Z" fill="#e9bf00" />
        </TaskIcon>
        <div className="flex h-full w-[48px] items-center justify-center bg-[#4a4a4a] pt-[5px]">
          <LogiclyLogo size={23} />
        </div>
        <TaskIcon>
          <rect x="1" y="1" width="22" height="22" rx="6" fill="#4a8cf7" />
          <rect x="5" y="8" width="9.500" height="8" rx="2" fill="#fff" />
          <path d="M15.300 11 L19 8.500 V15.500 L15.300 13Z" fill="#fff" />
        </TaskIcon>
        <TaskIcon>
          <rect x="1" y="1" width="22" height="22" fill="#27a9e8" />
          <path d="M10 23 L18 10 L23 16 V23Z" fill="#6e8de0" />
          <path d="M1 15 L8 8 L21 23 H1Z" fill="#184d94" />
          <circle cx="16" cy="6" r="2.100" fill="#fff" />
        </TaskIcon>
      </div>
      <svg width="120" height="24" viewBox="1092 736 120 24" className="ml-auto mt-[8px] shrink-0">
        <path d="M1097.500 751 L1103 745.500 L1108.500 751" fill="none" stroke="#fff" strokeWidth="1.300" />
        <g fill="none" stroke="#fff" strokeWidth="1.200">
          <rect x="1122.500" y="744.500" width="7.500" height="7" rx="1.500" />
          <path d="M1130 747 L1132.500 745.500 V750.500 L1130 749 M1123 741.500 Q1127 739.500 1131 741.500 M1123 754.500 Q1127 756.500 1131 754.500" />
        </g>
        <g transform="translate(1142.500 739.500) scale(.71)">
          <Spotify />
        </g>
        <g fill="none" stroke="#eee" strokeWidth="1.100">
          <path d="M1170.500 753.500 A12 12 0 0 1 1181.500 743" />
          <path d="M1173.500 754 A9 9 0 0 1 1181.500 746.500" />
          <path d="M1176.500 754 A6 6 0 0 1 1181.500 749.500" />
          <circle cx="1180" cy="753" r="1.200" fill="#fff" />
        </g>
        <path d="M1197.500 744.500 H1205 V752.500 H1194.500 M1206.500 746.500 V750.500 M1192 742 V744 M1196 742 V744 M1191.500 744.500 H1196.500 V747 H1191.500Z M1194 747 V753" fill="none" stroke="#fff" strokeWidth="1.200" />
        <rect x="1197.500" y="746.500" width="5.500" height="4" fill="#fff" />
      </svg>
      <div className="mt-[2px] flex w-[40px] items-center pl-[6px] font-['Open_Sans',sans-serif] text-[12px] tracking-[-0.6px]">
        <span className="pt-[1px]">TUR</span>
      </div>
      <div className="flex w-[56px] flex-col items-center pt-[1px] font-['Open_Sans',sans-serif] text-[11.500px] leading-[18px] tracking-[-0.45px]">
        <span>14:16</span>
        <span>16.01.2021</span>
      </div>
      <svg width="18" height="18" viewBox="0 0 18 18" className="ml-[16px] mr-[19px] mt-[11px] shrink-0 overflow-visible" fill="none">
        <path d="M1 1 H17 V13 H7 L4 16 V13 H1Z" fill="#fff" />
        <path d="M4 4.500 H14 M4 7.500 H14 M4 10.500 H9" stroke="#222" strokeWidth="1.100" />
        <circle cx="13.500" cy="13" r="4" fill="#1d1d1d" />
        <path d="M14.500 9.500 A3.500 3.500 0 1 0 17 14 Q13.500 14 14.500 9.500Z M11 15 L16 10" stroke="#fff" />
      </svg>
    </div>
  );
}

export default function App() {
  return (
    <div className="relative flex h-[768px] w-[1366px] flex-col overflow-hidden bg-[#8cbf26] p-[5px]">
      <div className="absolute left-[258px] top-0 h-[2px] w-[883px] rounded-b-[2px] bg-linear-to-b from-[#6f9f1d] to-[#82b323]" />
      <ShareBar />
      <TitleBar />
      <MenuBar />
      <Toolbar />
      <div className="flex h-[613px] shrink-0 overflow-hidden">
        <Palette />
        <ScrollColumn />
        <Circuit />
      </div>
      <PlayBar />
      <Taskbar />
    </div>
  );
}
